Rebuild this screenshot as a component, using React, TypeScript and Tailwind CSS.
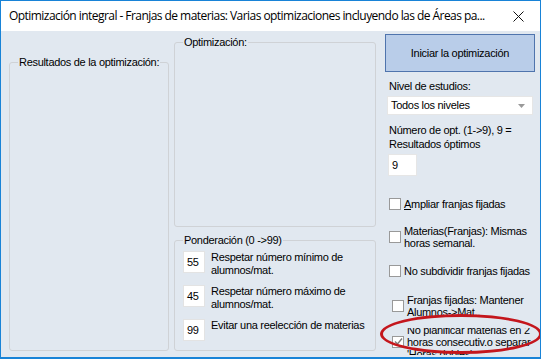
import React from "react";

const ui = { fontFamily: '"Liberation Sans", Arial, sans-serif' };

function Group({
  label,
  className,
  children,
}: {
  label: string;
  className?: string;
  children?: React.ReactNode;
}) {
  return (
    <fieldset
      className={`border border-[#cfd2d6] rounded-[3px] px-[8px] ${className ?? ""}`}
    >
      <legend className="px-[1px] text-[11px] leading-[13px] text-black whitespace-nowrap">
        {label}
      </legend>
      {children}
    </fieldset>
  );
}

function Weight({ value, text }: { value: string; text: React.ReactNode }) {
  return (
    <div className="flex items-start gap-[6px] h-[22px]">
      <div className="w-[22px] h-[22px] shrink-0 bg-white border border-[#e3e3e3] flex items-center pl-[3px] text-[11px]">
        {value}
      </div>
      <p className="text-[11px] leading-[13px] whitespace-nowrap">{text}</p>
    </div>
  );
}

function Check({
  label,
  checked,
  className,
}: {
  label: React.ReactNode;
  checked?: boolean;
  className?: string;
}) {
  return (
    <label
      className={`flex items-center gap-[3px] text-[11px] leading-[12px] whitespace-nowrap ${className ?? ""}`}
    >
      <span className="w-[12px] h-[12px] shrink-0 bg-white border border-[#999] flex items-center justify-center">
        {checked && (
          <svg width="9" height="9" viewBox="0 0 9 9">
            <path d="M1 4.5 L3.5 7 L8 1.5" fill="none" stroke="#7a7a7a" strokeWidth="1.4" />
          </svg>
        )}
      </span>
      <span>{label}</span>
    </label>
  );
}

export default function App() {
  return (
    <div
      className="w-[541px] h-[359px] border border-[#1883d7] border-b-2 flex flex-col bg-[#e1e8f0] text-black overflow-hidden tracking-[-0.3px]"
      style={ui}
    >
      {/* Title bar */}
      <div className="h-[30px] shrink-0 bg-white flex items-center justify-between pl-[8px] pr-[16px]">
        <span
          className="text-[12px] whitespace-nowrap tracking-[-0.55px]"
          style={{ fontFamily: '"Open Sans", "Noto Sans", sans-serif' }}
        >
          Optimización integral - Franjas de materias: Varias optimizaciones incluyendo las de Áreas pa...
        </span>
        <svg width="11" height="11" viewBox="0 0 11 11">
          <path d="M0.5 0.5 L10.5 10.5 M10.5 0.5 L0.5 10.5" stroke="#111" strokeWidth="1" />
        </svg>
      </div>

      {/* Body */}
      <div className="flex-1 relative flex pl-[8px]">
        {/* Left: results */}
        <div className="w-[158px] shrink-0 pt-[25px]">
          <Group label="Resultados de la optimización:" className="h-[295px]" />
        </div>

        {/* Middle */}
        <div className="w-[202px] shrink-0 ml-[7px] pt-[5px] flex flex-col">
          <Group label="Optimización:" className="h-[191px]" />
          <Group label="Ponderación (0 ->99)" className="h-[117px] mt-[7px] pt-[4px]">
            <div className="flex flex-col gap-[12px]">
              <Weight
                value="55"
                text={
                  <>
                    Respetar número mínimo de
                    <br />
                    alumnos/mat.
                  </>
                }
              />
              <Weight
                value="45"
                text={
                  <>
                    Respetar número máximo de
                    <br />
                    alumnos/mat.
                  </>
                }
              />
              <Weight value="99" text="Evitar una reelección de materias" />
            </div>
          </Group>
        </div>

        {/* Right */}
        <div className="w-[150px] shrink-0 ml-[9px] pt-[3px] flex flex-col text-[11px]">
          <button className="h-[38px] w-[150px] bg-[#b9cde9] border border-[#4f74ad] text-[11px] tracking-[-0.3px]">
            Iniciar la optimización
          </button>
          <p className="mt-[8px] leading-[13px] pl-[4px]">Nivel de estudios:</p>
          <div className="mt-[3px] ml-[2px] h-[19px] w-[146px] bg-white border border-[#e6e6e6] flex items-center justify-between pl-[3px] pr-[7px]">
            <span>Todos los niveles</span>
            <svg width="7" height="4" viewBox="0 0 7 4">
              <path d="M0 0 L7 0 L3.5 4 Z" fill="#999" />
            </svg>
          </div>
          <p className="mt-[8px] leading-[14px] pl-[4px] whitespace-nowrap">
            Número de opt. (1-&gt;9), 9 =
            <br />
            Resultados óptimos
          </p>
          <div className="mt-[3px] ml-[3px] w-[29px] h-[22px] bg-white border border-[#e6e6e6] flex items-center pl-[3px]">
            9
          </div>
          <Check
            className="mt-[22px] ml-[4px]"
            label={
              <>
                <u>A</u>mpliar franjas fijadas
              </>
            }
          />
          <Check
            className="mt-[15px] ml-[4px]"
            label={
              <>
                Materias(Franjas): Mismas
                <br />
                horas semanal.
              </>
            }
          />
          <Check className="mt-[16px] ml-[4px]" label="No subdividir franjas fijadas" />
          <Check
            className="mt-[17px] ml-[7px]"
            label={
              <>
                Franjas fijadas: Mantener
                <br />
                Alumnos-&gt;Mat..
              </>
            }
          />
          <div className="mt-[10px] ml-[7px] h-[27px] overflow-hidden flex items-center">
            <Check
              checked
              label={
                <>
                  No planificar materias en 2
                  <br />
                  horas consecutiv.o separar
                  <br />
                  'Horas dobles'
                </>
              }
            />
          </div>
        </div>

        {/* Red annotation ellipse */}
        <div className="absolute left-[379px] top-[283px] w-[162px] h-[40px] rounded-[50%] border-[3px] border-[#c4161c] pointer-events-none" />
      </div>
    </div>
  );
}
